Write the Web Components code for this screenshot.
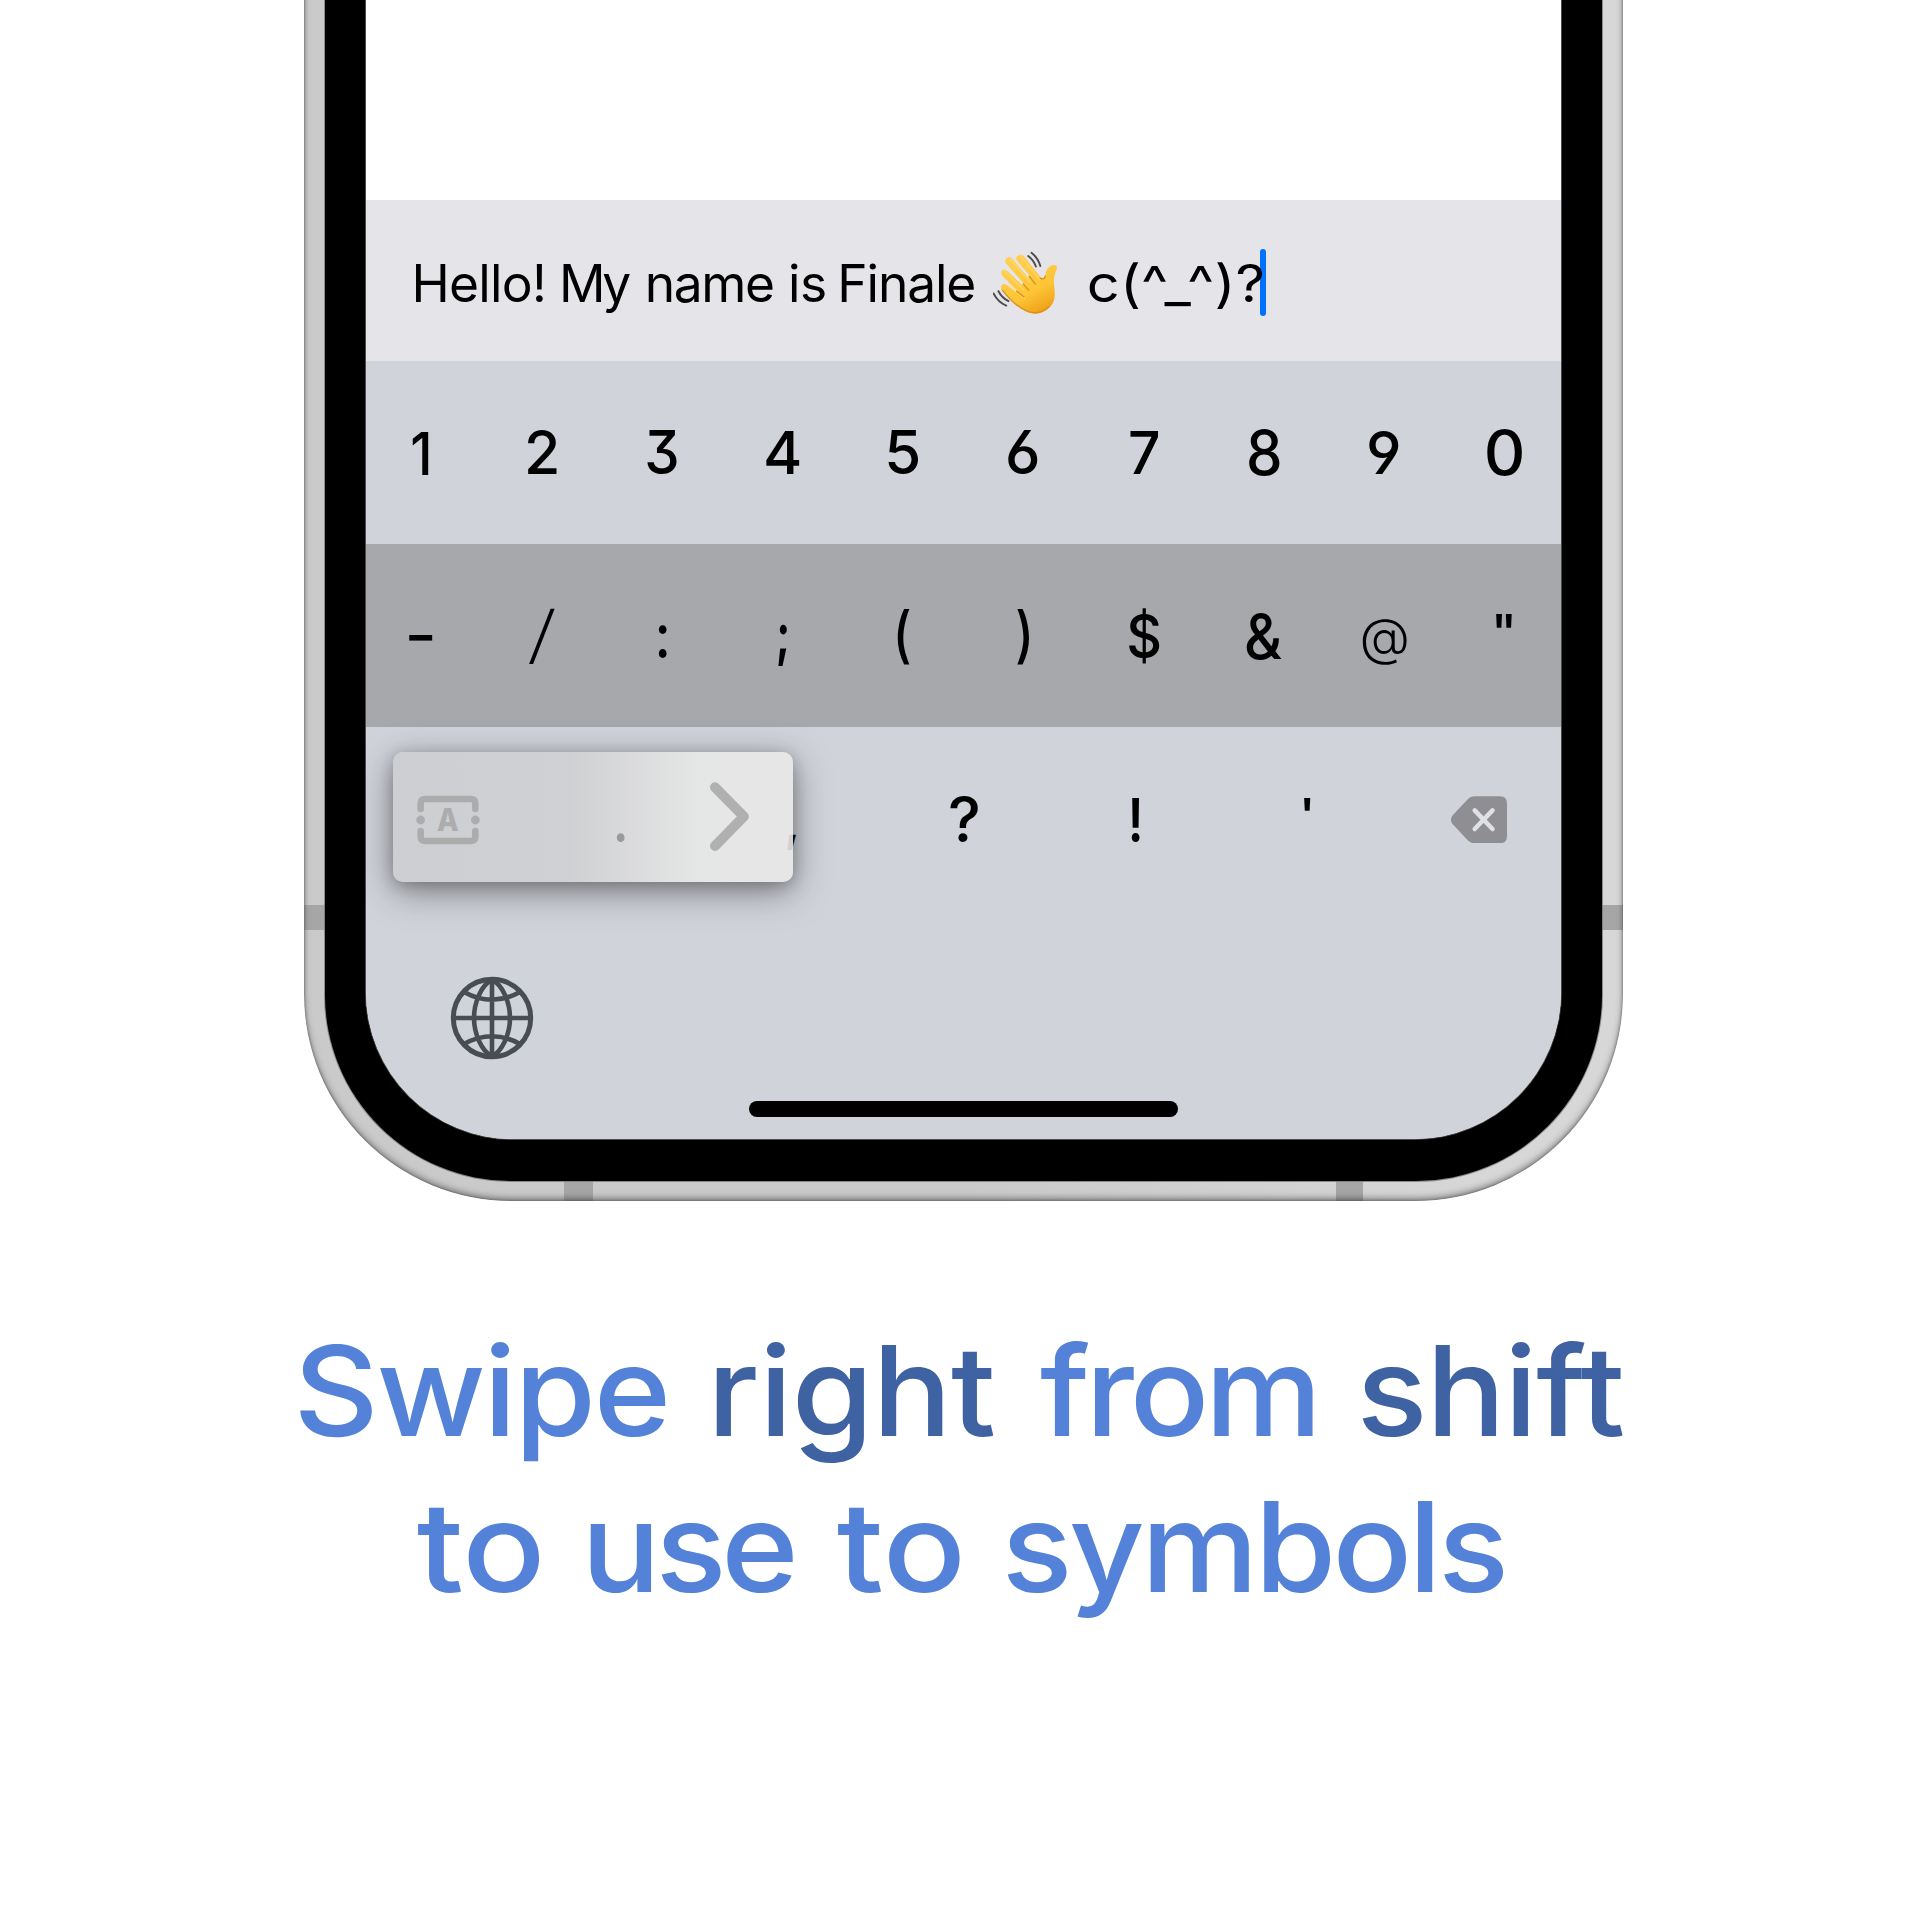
<!DOCTYPE html>
<html lang="en"><head><meta charset="utf-8"><title>Swipe right from shift</title>
<style>
html,body{margin:0;background:#fff;width:1920px;height:1920px;overflow:hidden}
body{font-family:Inter,"Liberation Sans",sans-serif}
</style></head><body>
<promo-page></promo-page>
<script>
const ctx=document.createElement('canvas').getContext('2d');
function define(name,html,after){
  const t=document.createElement('template');t.innerHTML=html;
  customElements.define(name,class extends HTMLElement{
    connectedCallback(){
      if(this.shadowRoot)return;
      this.attachShadow({mode:'open'}).append(t.content.cloneNode(true));
      if(after)after.call(this,this.shadowRoot);
    }
  });
}
/* Text whose inked area fills a given box: w alone spaces the letters, w and h scale the glyph. */
define('ink-text',`<style>
:host{display:block;flex:none}
span{display:block;width:max-content;white-space:pre;transform-origin:0 0}
</style><span></span>`,function(root){
  const s=root.querySelector('span'),a=n=>parseFloat(this.getAttribute(n));
  const size=a('size')||60,wt=this.getAttribute('weight')||'500',text=this.getAttribute('text'),w=a('w'),h=a('h'),y=a('y');
  const fam='Inter, "Liberation Sans", sans-serif';
  ctx.font=`${wt} ${size}px ${fam}`;
  const m=ctx.measureText(text),A=m.fontBoundingBoxAscent,D=m.fontBoundingBoxDescent;
  const iw=m.actualBoundingBoxLeft+m.actualBoundingBoxRight,ih=m.actualBoundingBoxAscent+m.actualBoundingBoxDescent;
  s.textContent=text;
  s.style.font=`${wt} ${size}px/${size}px ${fam}`;
  s.style.fontFeatureSettings='var(--feat,normal)';
  let sx=a('sx')||1,sy=a('sy')||1,up=m.actualBoundingBoxAscent;
  if(h){sx=w/iw;sy=h/ih;this.style.height=h+'px'}
  else{s.style.letterSpacing=(w/sx-iw)/(text.length-1)+'px';this.style.height='0px';up=0}
  const base=(size-(A+D))/2+A;
  s.style.transform=`translate(${m.actualBoundingBoxLeft*sx}px,${-(base-up)*sy}px) scale(${sx},${sy})`;
  s.style.height='0';
  this.style.width=w+'px';
  if(y)this.style.marginTop=y+'px';
});
define('key-row',`<style>
:host{display:grid;grid-template-columns:repeat(var(--n,10),var(--pitch,120.3px));justify-content:center;align-items:start;justify-items:center;box-sizing:border-box}
</style><slot></slot>`);
define('wave-emoji',`<style>:host{display:block;width:66px;height:64px;flex:none}svg{display:block}</style>
<svg width="66" height="64" viewBox="0 0 120 116" role="img" aria-label="👋">
<defs><linearGradient id="g" x1=".2" y1="0" x2=".7" y2="1"><stop offset="0" stop-color="#ffd054"/><stop offset=".65" stop-color="#fdc536"/><stop offset="1" stop-color="#ef9f17"/></linearGradient></defs>
<path d="M46 8c4-3 9-1 12 3l28 36c4 4 8 3 9-2 1-8 4-17 12-19 7-2 11 2 9 7-4 9-6 17-5 28 2 18 3 31-9 42-11 11-28 14-41 7C45 102 27 84 17 72c-6-8 0-15 7-11l17 13c2 1 4-1 2-3L17 45c-6-8 2-15 9-9l26 25c2 2 5-1 3-3L24 23c-6-9 4-16 11-9l28 33c2 2 5 0 3-3L44 18c-3-4-2-8 2-10z" fill="url(#g)"/>
<path d="M27 62l30 24M21 37l35 34M31 14l36 42M50 9l35 43" fill="none" stroke="#ffda69" stroke-width="3" stroke-linecap="round" opacity=".7"/>
<path d="M43 73l13 10M55 60l10 11M66 46l11 14M86 49c5 3 8 1 9-4M17 71c14 18 30 33 47 39 16 5 30 0 38-9" fill="none" stroke="#dc9018" stroke-width="2.5" stroke-linecap="round"/>
<path d="M70 3c8 6 13 14 16 24M64 9c7 5 11 11 14 19M1 77c5 10 13 18 23 22M10 73c4 8 10 14 18 18" fill="none" stroke="#4c4d51" stroke-width="3.6" stroke-linecap="round"/>
</svg>`);
define('message-field',`<style>
:host{display:flex;height:160.6px;background:#e5e4e9;box-sizing:border-box;padding-left:49.8px;align-items:flex-start;--feat:normal}
ink-text{margin-top:103.2px}
wave-emoji{margin:51px 0 0 19px}
i{display:block;width:6.5px;height:67.5px;margin:48.8px 0 0 -2.500px;border-radius:3px;background:#0071ff;flex:none}
</style>
<ink-text size="51.5" weight="400" text="Hello!" w="127.5"></ink-text>
<ink-text size="51.5" weight="400" text="My" w="67.3" style="margin-left:20.2px"></ink-text>
<ink-text size="51.5" weight="400" text="name" w="125.4" style="margin-left:17.3px"></ink-text>
<ink-text size="51.5" weight="400" text="is" w="34" style="margin-left:18px"></ink-text>
<ink-text size="51.5" weight="400" text="Finale" w="133" style="margin-left:16.3px"></ink-text>
<wave-emoji></wave-emoji>
<ink-text size="51.5" weight="400" text="c(^_^)?" w="173.5" sx="1.12" style="margin-left:29.500px"></ink-text>
<i></i>`);
define('shift-popup',`<style>
:host{display:block;position:absolute;left:27.4px;top:25.3px;width:400px;height:130px;border-radius:10px;
background:linear-gradient(90deg,rgba(205,206,210,.9) 0,rgba(206,208,210,.9) 44%,rgba(218,218,219,.9) 58%,rgba(231,233,231,.9) 77%,rgba(233,232,231,.9) 100%);
box-shadow:0 9px 34px rgba(35,35,38,.5),0 3px 14px rgba(35,35,38,.22)}
svg{display:block;margin:29.500px 0 0 316px}
</style><svg width="44" height="71" viewBox="0 0 44 71"><path d="M6 6.2L34.800 35.500L6 65" fill="none" stroke="#b0b0b0" stroke-width="10" stroke-linecap="round" stroke-linejoin="round"/></svg>`);
define('letters-icon',`<style>:host{display:grid;width:64px;height:50px;place-items:center}svg,ink-text{grid-area:1/1}svg{display:block}ink-text{color:#acacad}</style>
<svg width="64" height="50" viewBox="0 0 64 50"><g fill="none" stroke="#acacad" stroke-width="6.5" stroke-linecap="round"><path d="M4.7 14V8.5Q4.7 4 9.5 4H54.5Q59.3 4 59.3 8.5V14"/><path d="M4.7 36V41.5Q4.7 46 9.5 46H54.5Q59.3 46 59.3 41.5V36"/></g><g fill="#acacad"><circle cx="4.6" cy="25" r="4.4"/><circle cx="59.4" cy="25" r="4.4"/></g></svg>
<ink-text text="A" size="34" weight="800" w="21.5" h="23.5"></ink-text>`);
define('delete-icon',`<style>:host{display:block;width:56px;height:47.5px}svg{display:block}</style>
<svg width="56" height="47.5" viewBox="0 0 56 47.5"><path d="M23 .3H49Q56 .3 56 7.3V40Q56 47.2 49 47.2H23Q19.5 47.2 17 44.6L1.5 28Q-1.6 23.8 1.5 19.6L17 3Q19.5 .3 23 .3Z" fill="#8f8e93"/><path d="M23.7 14.4L41.5 33M41.5 14.4L23.7 33" stroke="#dfe1e6" stroke-width="4.5" stroke-linecap="round"/></svg>`);
define('globe-icon',`<style>:host{display:block;width:84px;height:84px}svg{display:block}</style>
<svg width="84" height="84" viewBox="-42 -42 84 84"><g fill="none" stroke="#484d55" stroke-width="4.6"><circle r="38.7" stroke-width="5"/><path d="M0-38C-10-34-18-16-18 0S-10 34 0 38C10 34 18 16 18 0S10-34 0-38M0-39V39M-39 0H39M-28-26Q0-10.500 28-26M-28 26Q0 10.500 28 26"/></g></svg>`);
define('phone-screen',`<style>
:host{display:block;width:1195.6px;height:1138.7px;background:#fff;border-radius:0 0 147px 147px;overflow:hidden;box-shadow:0 0 0 1px #4c4c4e;color:#000;--feat:"cv03","cv04","cv09"}
.blank{height:200px}
.nums{height:183.9px;background:#d0d3da}
.syms{height:182.2px;background:#a7a8ac}
.panel{position:relative;height:412px;background:#d0d3da}
.last{--n:7;--pitch:171.8px;height:245px}
.top{position:relative;z-index:2}
globe-icon{margin-left:84.800px;margin-top:4.800px}
.home{width:428.5px;height:15.5px;border-radius:8px;background:#000;margin:40.700px auto 0}
</style>
<div class="blank"></div><message-field></message-field>
<key-row class="nums">
<ink-text text="1" weight="550" w="17" h="43.5" y="70" style="margin-right:4px"></ink-text><ink-text text="2" w="29.500" h="44" y="69.500"></ink-text><ink-text text="3" w="30" h="44" y="69.500" style="margin-right:1px"></ink-text><ink-text text="4" w="34" h="43.5" y="69.500"></ink-text><ink-text text="5" w="30" h="44" y="69.500"></ink-text><ink-text text="6" w="32" h="44" y="69.500" style="margin-left:1px"></ink-text><ink-text text="7" w="28.500" h="43.5" y="69.500"></ink-text><ink-text text="8" w="31" h="45" y="69"></ink-text><ink-text text="9" w="32" h="44" y="69.500" style="margin-left:1px"></ink-text><ink-text text="0" weight="450" w="35.500" h="45" y="69"></ink-text>
</key-row>
<key-row class="syms">
<ink-text text="-" w="23.700" h="6" y="90.700" style="margin-right:3px"></ink-text><ink-text text="/" weight="200" w="27.500" h="56" y="63.600" style="margin-right:2px"></ink-text><ink-text text=":" w="9" h="33" y="81" style="margin-right:1px"></ink-text><ink-text text=";" weight="700" w="9" h="41.500" y="81" style="margin-right:1px"></ink-text><ink-text text="(" w="12.700" h="56" y="63.600"></ink-text><ink-text text=")" w="12.700" h="56" y="63.600" style="margin-right:1px"></ink-text><ink-text text="$" w="30.500" h="56" y="63.600"></ink-text><ink-text text="&amp;" weight="450" w="36" h="45.500" y="68.500"></ink-text><ink-text text="@" weight="350" w="45" h="46" y="74.500"></ink-text><ink-text text="&quot;" w="16" h="14.500" y="69.500" style="margin-right:1px"></ink-text>
</key-row>
<div class="panel">
<key-row class="last">
<letters-icon class="top" style="margin-top:68px"></letters-icon><ink-text class="top" style="color:#9b9b9d;margin-left:1px" text="." w="9" h="9" y="106.500"></ink-text><ink-text text="," w="9" h="16" y="107" weight="700"></ink-text><ink-text text="?" w="28" h="45" y="70" style="margin-left:1px"></ink-text><ink-text text="!" weight="600" w="9" h="44.500" y="70.500" style="margin-left:1px"></ink-text><ink-text text="'" w="6.500" h="13.500" y="71"></ink-text><delete-icon style="margin-top:69px"></delete-icon>
</key-row>
<shift-popup></shift-popup>
<globe-icon></globe-icon>
<div class="home"></div>
</div>`);
define('phone-frame',`<style>
:host{display:block;position:relative;width:1319px;height:1201.3px;margin-left:303.6px;box-sizing:border-box;border-radius:0 0 207px 207px;overflow:hidden;background:linear-gradient(90deg,#cacaca 0 50%,#d7d7d7 90%);padding:0 21px 20.500px 21.700px}
.bezel{height:1180.700px;background:#000;border-radius:0 0 186px 186px;box-shadow:0 0 0 1px rgba(120,120,120,.8);padding-left:40.300px;box-sizing:border-box;position:relative}
.edge{position:absolute;inset:-20px 0 0 0;border-radius:0 0 207px 207px;box-shadow:inset 0 -3px 6px rgba(50,50,50,.5),inset 0 0 2px 1px rgba(90,90,90,.4)}
b{position:absolute;background:#a6a6a6}
</style>
<b style="left:0;top:904.500px;width:24px;height:25px"></b><b style="right:0;top:904.500px;width:24px;height:25px"></b>
<b style="left:260.700px;bottom:0;width:28.500px;height:24px"></b><b style="left:1032.400px;bottom:0;width:27px;height:24px"></b>
<div class="edge"></div><div class="bezel"><slot></slot></div>`);
define('swipe-caption',`<style>
:host{display:block;color:#5482d9}
div{display:flex;align-items:flex-start}
.one{padding:235.700px 0 0 300px;height:156px}
.two{padding:0 0 0 418.400px}
.d{color:#3e62a2}
</style>
<div class="one"><ink-text size="122" weight="460" sx="1.08" sy="1.025" text="Swipe" w="366.200"></ink-text><ink-text class="d" size="122" weight="460" sx="1.08" sy="1.025" text="right" w="278.300" style="margin-left:49.900px"></ink-text><ink-text size="122" weight="460" sx="1.08" sy="1.025" text="from" w="271.900" style="margin-left:46.400px"></ink-text><ink-text class="d" size="122" weight="460" sx="1.08" sy="1.025" text="shift" w="261.500" style="margin-left:49.500px"></ink-text></div>
<div class="two"><ink-text size="122" weight="460" sx="1.13" sy="1.025" text="to" w="121"></ink-text><ink-text size="122" weight="460" sx="1.08" sy="1.025" text="use" w="203.600" style="margin-left:50.400px"></ink-text><ink-text size="122" weight="460" sx="1.13" sy="1.025" text="to" w="121.500" style="margin-left:44.600px"></ink-text><ink-text size="122" weight="460" sx="1.08" sy="1.025" text="symbols" w="497" style="margin-left:47.300px"></ink-text></div>`);
define('promo-page',`<style>:host{display:block;width:1920px;height:1920px;background:#fff}</style>
<phone-frame><phone-screen></phone-screen></phone-frame><swipe-caption></swipe-caption>`);
</script></body></html>
